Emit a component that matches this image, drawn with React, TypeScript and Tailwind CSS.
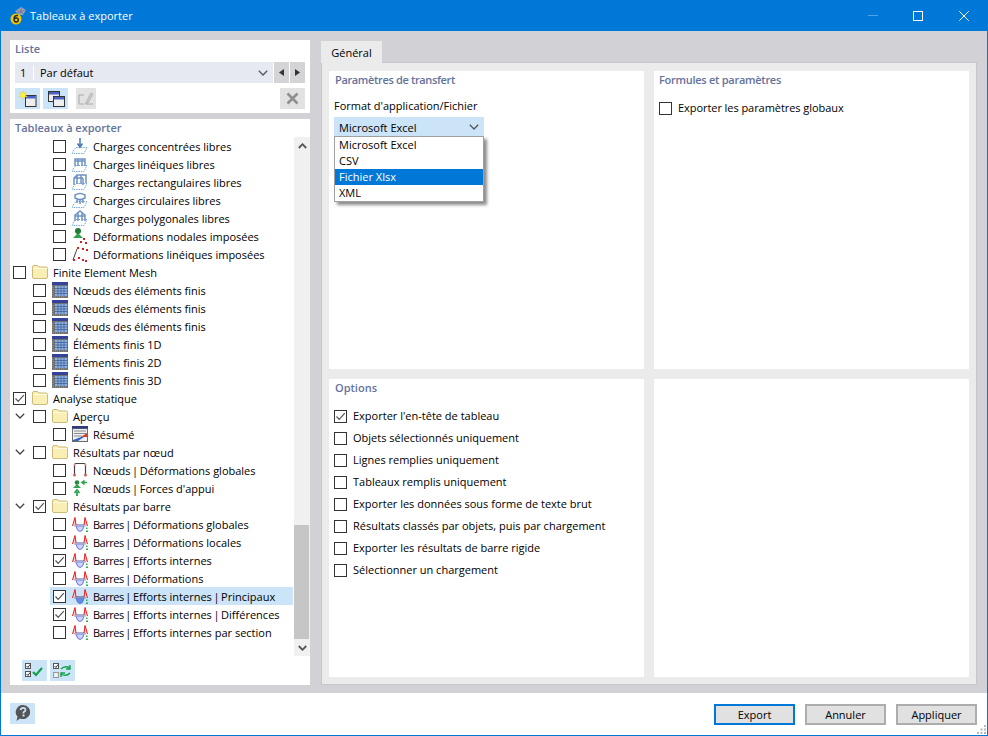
import React from "react";

const F = "font-['Open_Sans',sans-serif]";

function Check({ on }: { on?: boolean }) {
  return (
    <span className="flex h-[13px] w-[13px] shrink-0 items-center justify-center border border-[#333] bg-white">
      {on && (
        <svg width="11" height="11" viewBox="0 0 11 11">
          <path d="M1.5 5.5 L4.2 8.3 L9.8 2.2" fill="none" stroke="#555" strokeWidth="1.2" />
        </svg>
      )}
    </span>
  );
}

const Folder = () => (
  <svg width="16" height="14" viewBox="0 0 16 14">
    <path d="M0.5 3 V2 Q0.5 0.5 2 0.5 H5.5 L7 2 H14 Q15.5 2 15.5 3.5 V12 Q15.5 13.5 14 13.5 H2 Q0.5 13.5 0.5 12 Z" fill="#f9efb4" stroke="#cdbb78" />
    <path d="M1 3.5 H15" stroke="#fffbe0" />
  </svg>
);

const TableIcon = () => (
  <svg width="16" height="16" viewBox="0 0 16 16">
    <rect x="0" y="0" width="16" height="16" fill="#6f6f6f" />
    <rect x="0" y="0" width="16" height="3" fill="#34429a" />
    <rect x="3" y="4" width="12" height="10" fill="#8fb3de" />
    <path d="M3 6.500H15M3 9H15M3 11.500H15M6 4V14M9 4V14M12 4V14" stroke="#3f5f9c" strokeWidth="0.8" />
    <path d="M1 5V15M1 15H15" stroke="#a8a8a8" strokeWidth="0.8" strokeDasharray="1 1" />
  </svg>
);

const Barre = ({ sel }: { sel?: boolean }) => (
  <svg width="16" height="16" viewBox="0 0 16 16">
    <path d="M4 10 Q5 15.500 8 15.500 Q11 15.500 12 10 Z" fill={sel ? "#5f8edc" : "#cdd3fb"} stroke="#5a66e8" strokeWidth="0.9" />
    <rect x="2" y="8" width="12" height="2.500" fill={sel ? "#7f94bc" : "#a3aed2"} />
    <path d="M0.500 10 L3 1.500 L4 9 M15.500 10 L13 1.500 L12 9" fill="#fbd0d0" stroke="#e81c1c" strokeWidth="1" />
    <rect x="14" y="14.500" width="2" height="1.500" fill="#19b347" />
    <rect x="14" y="11.500" width="1.500" height="1.500" fill="#19b347" />
  </svg>
);

function Load({ kind }: { kind: number }) {
  const frame =
    kind === 1
      ? "M3 10V3H13V10M6 3V10M10 3V10M3 5H13"
      : kind === 2
      ? "M2 11V4L5 1H14V9M5 1V10M9 1V10M2 4H11M11 4V11"
      : kind === 3
      ? "M3 3Q8 0 13 3V6Q8 9 3 6ZM3 3V6M13 3V6M5 6V11M8 7V12M11 6V11"
      : "M3 11V5L8 1L13 5V11M6 3V11M10 3V11M3 6H13";
  return (
    <svg width="16" height="16" viewBox="0 0 16 16">
      <path d="M1 13 L4 9.500 H15 L12 15.500 H0.500 Z" fill="none" stroke="#6da7dd" strokeWidth="1" strokeDasharray="1.4 1" />
      {kind === 0 ? (
        <path d="M8 0V8M5.500 5.500 L8 9 L10.500 5.500" fill="none" stroke="#4a7db8" strokeWidth="1.6" />
      ) : (
        <path d={frame} fill="none" stroke="#6f93c2" strokeWidth="1.5" />
      )}
    </svg>
  );
}

const Nodal = () => (
  <svg width="16" height="16" viewBox="0 0 16 16">
    <path d="M1 10 L6 5 L11 10 Z" fill="#2fa24c" />
    <circle cx="6" cy="3" r="3" fill="#1e7e34" />
    <rect x="11" y="10" width="2" height="2" fill="#d02020" />
    <rect x="8" y="13" width="2" height="2" fill="#d02020" />
    <rect x="13" y="14" width="2" height="2" fill="#d02020" />
  </svg>
);
const Lineic = () => (
  <svg width="16" height="16" viewBox="0 0 16 16">
    <path d="M5 3 L1 14" stroke="#444" strokeWidth="1" />
    <path d="M5 1H7V3H5ZM10 2H12V4H10ZM14 3H16V5H14ZM6 11H8V13H6ZM10 13H12V15H10ZM13 14H15V16H13ZM1 13H3V15H1Z" fill="#d62020" />
  </svg>
);
const Summary = () => (
  <svg width="16" height="16" viewBox="0 0 16 16">
    <rect width="16" height="16" fill="#6c6c6c" />
    <rect x="0" y="0" width="16" height="2.500" fill="#2f3b80" />
    <rect x="1" y="3" width="14" height="12" fill="#eef0f5" />
    <path d="M2 5H14M2 7.500H14M2 10H10" stroke="#8a8a8a" />
    <path d="M9 11 L15 7 V11 Z" fill="#d23a2a" />
    <path d="M1 14 L9 11 H12 L6 15 H1 Z" fill="#3a62c0" />
  </svg>
);
const NodeDef = () => (
  <svg width="16" height="16" viewBox="0 0 16 16">
    <path d="M2.500 13 V3 Q2.500 1.500 4 1.500 H12 Q13.500 1.500 13.500 3 V13" fill="none" stroke="#444" strokeWidth="1.2" />
    <circle cx="2.500" cy="13" r="1.500" fill="#d06060" />
    <circle cx="13.500" cy="13" r="1.500" fill="#d06060" />
    <circle cx="2.500" cy="3" r="1" fill="#e09090" />
    <circle cx="13.500" cy="3" r="1" fill="#e09090" />
  </svg>
);
const Support = () => (
  <svg width="16" height="16" viewBox="0 0 16 16">
    <circle cx="5" cy="2.500" r="2.300" fill="#2a8a3e" />
    <path d="M1 8 L5 4 L9 8 Z" fill="#2fa24c" />
    <path d="M5 16 V12 M2.500 13 L5 10 L7.500 13" fill="none" stroke="#2fa24c" strokeWidth="1.800" />
    <path d="M15 2.500H11 M12.500 0.500 L10 2.500 L12.500 4.500" fill="none" stroke="#2fa24c" strokeWidth="1.600" />
  </svg>
);

type Row = { t: string; lv: number; icon: React.ReactNode; on?: boolean; chev?: boolean; sel?: boolean };

const rows: Row[] = [
  { t: "Charges concentrées libres", lv: 3, icon: <Load kind={0} /> },
  { t: "Charges linéiques libres", lv: 3, icon: <Load kind={1} /> },
  { t: "Charges rectangulaires libres", lv: 3, icon: <Load kind={2} /> },
  { t: "Charges circulaires libres", lv: 3, icon: <Load kind={3} /> },
  { t: "Charges polygonales libres", lv: 3, icon: <Load kind={4} /> },
  { t: "Déformations nodales imposées", lv: 3, icon: <Nodal /> },
  { t: "Déformations linéiques imposées", lv: 3, icon: <Lineic /> },
  { t: "Finite Element Mesh", lv: 1, icon: <Folder /> },
  { t: "Nœuds des éléments finis", lv: 2, icon: <TableIcon /> },
  { t: "Nœuds des éléments finis", lv: 2, icon: <TableIcon /> },
  { t: "Nœuds des éléments finis", lv: 2, icon: <TableIcon /> },
  { t: "Éléments finis 1D", lv: 2, icon: <TableIcon /> },
  { t: "Éléments finis 2D", lv: 2, icon: <TableIcon /> },
  { t: "Éléments finis 3D", lv: 2, icon: <TableIcon /> },
  { t: "Analyse statique", lv: 1, icon: <Folder />, on: true },
  { t: "Aperçu", lv: 2, icon: <Folder />, chev: true },
  { t: "Résumé", lv: 3, icon: <Summary /> },
  { t: "Résultats par nœud", lv: 2, icon: <Folder />, chev: true },
  { t: "Nœuds | Déformations globales", lv: 3, icon: <NodeDef /> },
  { t: "Nœuds | Forces d'appui", lv: 3, icon: <Support /> },
  { t: "Résultats par barre", lv: 2, icon: <Folder />, chev: true, on: true },
  { t: "Barres | Déformations globales", lv: 3, icon: <Barre /> },
  { t: "Barres | Déformations locales", lv: 3, icon: <Barre /> },
  { t: "Barres | Efforts internes", lv: 3, icon: <Barre />, on: true },
  { t: "Barres | Déformations", lv: 3, icon: <Barre /> },
  { t: "Barres | Efforts internes | Principaux", lv: 3, icon: <Barre sel />, on: true, sel: true },
  { t: "Barres | Efforts internes | Différences", lv: 3, icon: <Barre />, on: true },
  { t: "Barres | Efforts internes par section", lv: 3, icon: <Barre /> },
];

const Chevron = ({ c = "#444" }: { c?: string }) => (
  <svg width="10" height="6" viewBox="0 0 10 6">
    <path d="M0.800 0.800 L5 5 L9.200 0.800" fill="none" stroke={c} strokeWidth="1.300" />
  </svg>
);

function Label({ t }: { t: string }) {
  const parts = t.split(" | ");
  if (parts.length === 1) return <span className="whitespace-nowrap">{t}</span>;
  return (
    <span className="whitespace-nowrap">
      {parts.map((p, i) => (
        <React.Fragment key={i}>
          {i > 0 && <span className="mx-[-1.250px]"> | </span>}
          {p === "Barres" ? <span className="tracking-[-0.5px]">{p}</span> : p}
        </React.Fragment>
      ))}
    </span>
  );
}

function TreeRow({ r }: { r: Row }) {
  const body = (
    <>
      <Check on={r.on} />
      <div className="ml-[6px] flex w-[16px] shrink-0 items-center justify-center">{r.icon}</div>
      <div className="ml-[5px] mt-[2px]">
        <Label t={r.t} />
      </div>
    </>
  );
  if (r.lv === 3) {
    return (
      <div className="flex h-[18px] items-center pl-[40px]">
        <div className={`flex h-[18px] w-[243px] items-center pl-[3px] ${r.sel ? "bg-[#cce4f7]" : ""}`}>{body}</div>
      </div>
    );
  }
  return (
    <div className={`flex h-[18px] items-center ${r.lv === 1 ? "pl-[3px]" : ""}`}>
      {r.lv === 2 && <div className="flex w-[23px] shrink-0 items-center pl-[5px]">{r.chev && <Chevron />}</div>}
      {body}
    </div>
  );
}

const Title = ({ children, className = "" }: { children: React.ReactNode; className?: string }) => (
  <div className={`font-semibold leading-[16px] text-[#64729c] ${className}`}>{children}</div>
);

const Btn = ({ label, primary }: { label: string; primary?: boolean }) => (
  <button className={`h-[21px] w-[81px] bg-[#e1e1e1] text-[11px] leading-none text-black ${primary ? "border-2 border-[#0078d7]" : "border-2 border-[#adadad]"}`}>
    {label}
  </button>
);

const ToolBtn = ({ children, w, gray }: { children: React.ReactNode; w: string; gray?: boolean }) => (
  <div className={`flex h-[21px] items-center justify-center ${w} ${gray ? "bg-[#e2e2e2]" : "bg-[#cce4f7]"}`}>{children}</div>
);

const MiniWin = ({ star }: { star?: boolean }) => (
  <svg width="22" height="18" viewBox="0 0 22 18">
    {star ? (
      <>
        <rect x="8.500" y="5.500" width="10.500" height="11" fill="#eee" stroke="#333" />
        <rect x="9" y="6" width="9.500" height="2.500" fill="#4a63c8" />
        <path d="M6 1 L7 3.500 L9.500 2.500 L8.300 5 L10.500 7 L7.700 6.800 L6 9.500 L5 6.800 L2 7 L4 5 L2.500 2.500 L5 3.500 Z" fill="#fff23a" stroke="#d8c820" strokeWidth="0.400" />
      </>
    ) : (
      <>
        <rect x="3.500" y="1.500" width="11" height="10" fill="#eee" stroke="#333" />
        <rect x="4" y="2" width="10" height="2.500" fill="#4a63c8" />
        <rect x="8.500" y="6.500" width="11" height="10" fill="#eee" stroke="#333" />
        <rect x="9" y="7" width="10" height="2.500" fill="#4a63c8" />
      </>
    )}
  </svg>
);

const options = [
  { t: "Exporter l'en-tête de tableau", on: true },
  { t: "Objets sélectionnés uniquement" },
  { t: "Lignes remplies uniquement" },
  { t: "Tableaux remplis uniquement" },
  { t: "Exporter les données sous forme de texte brut" },
  { t: "Résultats classés par objets, puis par chargement" },
  { t: "Exporter les résultats de barre rigide" },
  { t: "Sélectionner un chargement" },
];

export default function App() {
  return (
    <div className={`${F} flex h-[736px] w-[988px] flex-col overflow-hidden border-x border-b border-[#0078d7] bg-[#d2d2d6] text-[11px] leading-[16px] text-black`}>
      {/* title bar */}
      <div className="-mx-px flex h-[31px] shrink-0 items-center bg-[#0078d7] text-white">
        <svg className="ml-[9px]" width="17" height="18" viewBox="0 0 17 18">
          <path d="M6 4 L12 0 L17 3 L14 8 L10 8 Z" fill="#9aa3b8" />
          <path d="M7 3 L15 7 M10 1 L14 6 M13 1 L11 7 M16 3 L8 6" stroke="#6a7390" strokeWidth="0.600" />
          <circle cx="7" cy="12" r="5.500" fill="#f5c400" />
          <path d="M9 8.500 Q5 8 5 12 Q5 15 7.200 15 Q9.300 15 9.300 13 Q9.300 11 7.300 11 Q5.800 11 5.200 12" fill="none" stroke="#1f2a44" strokeWidth="1.400" />
        </svg>
        <span className="ml-[4px] text-[11px]">Tableaux à exporter</span>
        <div className="ml-auto flex items-center">
          <div className="mr-[35px] h-px w-[10px] bg-[#4fa3e6]" />
          <div className="mr-[36px] h-[10px] w-[10px] border border-white" />
          <svg className="mr-[19px]" width="10" height="10" viewBox="0 0 10 10">
            <path d="M0.300 0.300 L9.700 9.700 M9.700 0.300 L0.300 9.700" stroke="#fff" strokeWidth="1" />
          </svg>
        </div>
      </div>

      {/* body */}
      <div className="flex min-h-0 flex-1 gap-[11px] pb-[8px] pl-[9px] pr-[10px] pt-[9px]">
        {/* left column */}
        <div className="flex w-[300px] shrink-0 flex-col gap-[6px]">
          <div className="h-[73px] bg-white px-[5px] pt-[1px]">
            <Title>Liste</Title>
            <div className="mt-[5px] flex h-[21px] gap-px">
              <div className="flex flex-1 items-center bg-[#e6e8f2]">
                <span className="w-[18px] pl-[5px]">1</span>
                <div className="h-[15px] w-px bg-white" />
                <span className="ml-[6px]">Par défaut</span>
                <div className="ml-auto mr-[5px]">
                  <Chevron c="#555" />
                </div>
              </div>
              <div className="flex w-[15px] items-center justify-center bg-[#d4d4d6]">
                <svg width="5" height="7" viewBox="0 0 5 7"><path d="M5 0V7L0 3.500Z" fill="#333" /></svg>
              </div>
              <div className="flex w-[15px] items-center justify-center bg-[#d4d4d6]">
                <svg width="5" height="7" viewBox="0 0 5 7"><path d="M0 0V7L5 3.500Z" fill="#333" /></svg>
              </div>
            </div>
            <div className="mt-[5px] flex">
              <ToolBtn w="w-[25px]"><MiniWin star /></ToolBtn>
              <div className="ml-[3px]"><ToolBtn w="w-[25px]"><MiniWin /></ToolBtn></div>
              <div className="ml-[8px]">
                <ToolBtn w="w-[20px]" gray>
                  <svg width="16" height="14" viewBox="0 0 16 14">
                    <path d="M6 3H1V12H6M8 12H15" fill="none" stroke="#aaa" />
                    <path d="M8 10 L13 1 L15 2 L10 11 L7.500 12 Z" fill="#c8c8c8" stroke="#aaa" strokeWidth="0.600" />
                  </svg>
                </ToolBtn>
              </div>
              <div className="ml-auto">
                <ToolBtn w="w-[25px]" gray>
                  <svg width="13" height="13" viewBox="0 0 13 13">
                    <path d="M1.500 1.500 L11.500 11.500 M11.500 1.500 L1.500 11.500" stroke="#8f8f8f" strokeWidth="2.600" />
                  </svg>
                </ToolBtn>
              </div>
            </div>
          </div>

          <div className="flex min-h-0 flex-1 flex-col bg-white">
            <div className="h-[18px] pl-[5px] pt-px"><Title>Tableaux à exporter</Title></div>
            <div className="flex h-[519px] shrink-0">
              <div className="w-[284px] shrink-0 overflow-hidden">
                {rows.map((r, i) => (
                  <TreeRow key={i} r={r} />
                ))}
              </div>
              <div className="flex w-[16px] shrink-0 flex-col bg-[#f0f0f0]">
                <div className="flex h-[18px] items-center justify-center">
                  <svg width="9" height="6" viewBox="0 0 9 6"><path d="M0.800 5 L4.500 1.200 L8.200 5" fill="none" stroke="#555" strokeWidth="1.800" /></svg>
                </div>
                <div className="h-[370px]" />
                <div className="mr-px h-[114px] bg-[#c6c6c6]" />
                <div className="flex h-[17px] items-center justify-center">
                  <svg width="9" height="6" viewBox="0 0 9 6"><path d="M0.800 1 L4.500 4.800 L8.200 1" fill="none" stroke="#555" strokeWidth="1.800" /></svg>
                </div>
              </div>
            </div>
            <div className="ml-[12px] mt-[4px] flex gap-[3px]">
              <ToolBtn w="w-[25px]">
                <svg width="20" height="16" viewBox="0 0 20 16">
                  <rect x="0.500" y="0.500" width="5" height="5" fill="#fff" stroke="#555" />
                  <rect x="0.500" y="8.500" width="5" height="5" fill="#fff" stroke="#555" />
                  <path d="M1.500 3 L3 4.500 L5 1.500M1.500 11 L3 12.500 L5 9.500" fill="none" stroke="#333" />
                  <path d="M8 9 L11 12 L17 5" fill="none" stroke="#12a04a" strokeWidth="2.200" />
                </svg>
              </ToolBtn>
              <ToolBtn w="w-[25px]">
                <svg width="20" height="16" viewBox="0 0 20 16">
                  <rect x="0.500" y="0.500" width="5" height="5" fill="#fff" stroke="#555" />
                  <rect x="0.500" y="9.500" width="5" height="5" fill="#eee" stroke="#999" />
                  <path d="M1.500 3 L3 4.500 L5 1.500" fill="none" stroke="#333" />
                  <path d="M8 6 Q12 2 17 5 M17 2 V6 H13" fill="none" stroke="#12a04a" strokeWidth="1.400" />
                  <path d="M17 10 Q13 14 8 11 M8 14 V10 H12" fill="none" stroke="#12a04a" strokeWidth="1.400" />
                </svg>
              </ToolBtn>
            </div>
          </div>
        </div>

        {/* right column */}
        <div className="flex min-w-0 flex-1 flex-col">
          <div className="z-10 -mb-px mt-px flex h-[22px] w-[61px] items-center justify-center bg-[#ebebeb] pt-[2px] text-[11px]">Général</div>
          <div className="grid flex-1 grid-cols-2 grid-rows-2 gap-[10px] border border-[#c6c6cc] bg-[#ebebeb] px-[7px] pb-[7px] pt-[8px]">
            <div className="relative bg-white px-[5px] pt-px">
              <div className="pl-px"><Title className="tracking-[-0.35px]">Paramètres de transfert</Title></div>
              <div className="mt-[10px]">Format d'application/Fichier</div>
              <div className="mt-[3px] flex h-[20px] w-[150px] items-center justify-between bg-[#cce4f7] pl-[5px] pr-[5px]">
                <span className="mt-[2px]">Microsoft Excel</span>
                <Chevron c="#555" />
              </div>
              <div className="absolute left-[5px] top-[65px] z-20 w-[150px] border border-[#a0a0a0] bg-white shadow-[3px_3px_3px_rgba(0,0,0,0.45)]">
                {["Microsoft Excel", "CSV", "Fichier Xlsx", "XML"].map((o) => (
                  <div key={o} className={`flex h-[16px] items-center pl-[4px] ${o === "Fichier Xlsx" ? "bg-[#0078d7] text-white" : ""}`}>{o}</div>
                ))}
              </div>
            </div>
            <div className="bg-white px-[5px] pt-px">
              <Title className="tracking-[-0.27px]">Formules et paramètres</Title>
              <div className="mt-[12px] flex h-[16px] items-center gap-[6px]">
                <Check />
                <span className="tracking-[-0.06px]">Exporter les paramètres globaux</span>
              </div>
            </div>
            <div className="bg-white px-[5px] pt-px">
              <div className="pl-px"><Title>Options</Title></div>
              <div className="mt-[9px] flex flex-col">
                {options.map((o) => (
                  <div key={o.t} className="flex h-[22px] items-center gap-[6px]">
                    <Check on={o.on} />
                    <span>{o.t}</span>
                  </div>
                ))}
              </div>
            </div>
            <div className="bg-white" />
          </div>
        </div>
      </div>

      {/* footer */}
      <div className="relative flex h-[42px] shrink-0 items-center bg-white pl-[9px] pr-[10px]">
        <div className="mb-[2px]">
          <ToolBtn w="w-[25px]">
            <svg width="18" height="18" viewBox="0 0 18 18">
              <path d="M9 1 A7.500 7 0 1 1 6 14.500 L2.500 17 L3.500 12.500 A7.500 7 0 0 1 9 1 Z" fill="#555" />
              <path d="M6.500 6 Q7 3.800 9.200 3.800 Q11.500 3.800 11.500 6 Q11.500 7.300 9.500 8.300 V9.500" fill="none" stroke="#cce4f7" strokeWidth="1.700" />
              <rect x="8.500" y="10.500" width="2" height="2" fill="#cce4f7" />
            </svg>
          </ToolBtn>
        </div>
        <div className="ml-auto flex gap-[10px]">
          <Btn label="Export" primary />
          <Btn label="Annuler" />
          <Btn label="Appliquer" />
        </div>
        <svg className="absolute bottom-0 right-0" width="11" height="11" viewBox="0 0 11 11">
          <path d="M8 1H10V3H8ZM8 4.500H10V6.500H8ZM4.500 4.500H6.500V6.500H4.500ZM8 8H10V10H8ZM4.500 8H6.500V10H4.500ZM1 8H3V10H1Z" fill="#b8b8b8" />
        </svg>
      </div>
    </div>
  );
}
